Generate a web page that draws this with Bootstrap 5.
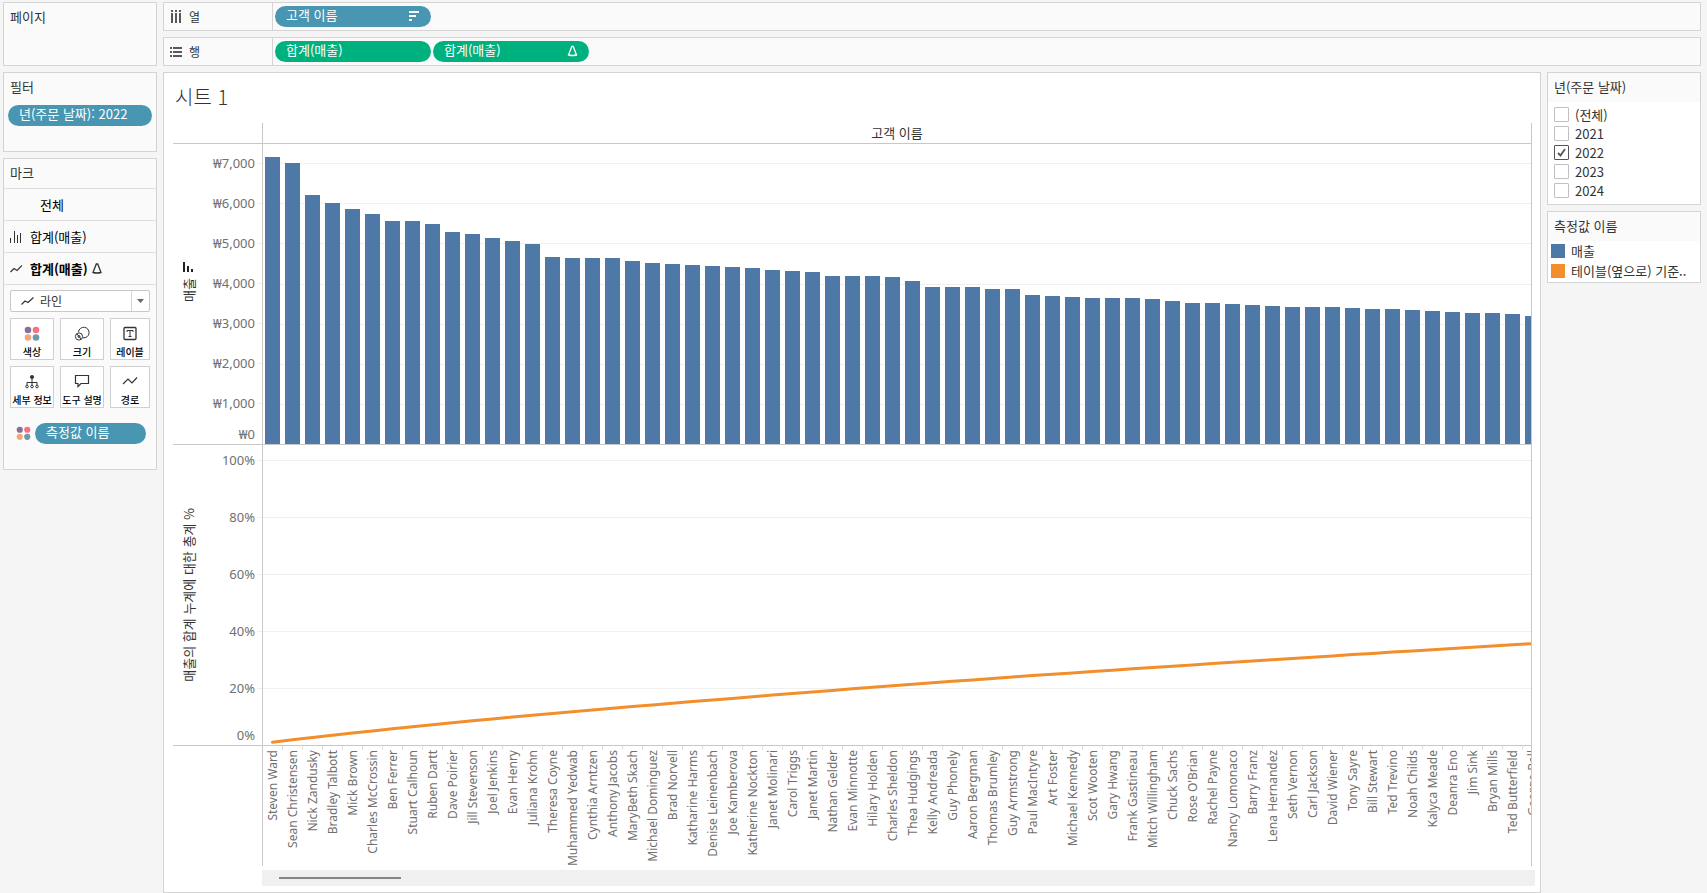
<!DOCTYPE html>
<html lang="ko">
<head>
<meta charset="utf-8">
<meta name="viewport" content="width=device-width, initial-scale=1">
<title>시트 1</title>
<link rel="stylesheet" href="https://cdn.jsdelivr.net/npm/bootstrap@5.3.0/dist/css/bootstrap.min.css">
<style>
  :root { --edge: #d4d4d4; --axis: #c8c8c8; --grid: #f0f0f0; --dim: #4996b2; --measure: #00b180; }
  body { background: #f5f5f5; color: #333; font: 13px/20px "Noto Sans CJK KR", "Noto Sans", sans-serif; }
  .workspace { padding: 2px 6px 0 3px; gap: 6px; }
  .side { flex: 0 0 154px; gap: 6px; }
  .main-area { gap: 6px; min-width: 0; }
  .panel { border: 1px solid var(--edge); background: #fafafa; }
  .panel-title { height: 29px; padding: 0 6px; font-size: 13px; line-height: 28px; font-weight: 400; margin: 0; white-space: nowrap; }
  .pages { min-height: 64px; }
  .filters { min-height: 80px; }
  .pill { display: flex; justify-content: space-between; align-items: flex-start; height: 21px; border: 0; border-radius: 11px; padding: 0 11px; color: #fff; font-size: 13px; line-height: 18px; background: var(--dim); white-space: nowrap; }
  .pill-measure { background: var(--measure); }
  .filters .pill { margin: 3px 4px; width: 144px; }
  .shelf { height: 29px; }
  .shelf-name { width: 109px; padding-left: 6px; gap: 7px; border-right: 1px solid var(--edge); font-size: 12px; }
  .shelf .pill { width: 156px; }
  .shelf-pills { gap: 2px; padding-left: 2px; }

  .mark-row { height: 32px; border: 0; border-top: 1px solid #dedede; background: none; padding: 0 6px; gap: 8px; color: #000; font-size: 13px; width: 100%; }
  .mark-row.all { padding-left: 36px; }
  .mark-body { border-top: 1px solid #dedede; padding: 5px 6px 25px; }
  .mark-type { height: 22px; }
  .mark-type select { height: 22px; border: 1px solid #c8c8c8; border-radius: 2px; background: #fff; padding: 0 0 0 29px; font-size: 12px; line-height: 20px; color: #333; appearance: none; }
  .mark-type svg { position: absolute; left: 11px; top: 6px; pointer-events: none; }
  .mark-type .drop { left: auto; right: 0; top: 1px; }
  .mark-grid { display: grid; grid-template-columns: 44px 44px 40px; gap: 6px; margin-top: 6px; }
  .mark-btn { height: 42px; border: 1px solid #d0d0d0; background: #fff; padding: 5px 0 0; font-size: 10px; line-height: 14px; font-weight: 500; color: #000; white-space: nowrap; }
  .mark-btn svg { display: block; margin: 0 auto 2px; }
  .mark-pill { margin-top: 15px; padding-left: 6px; gap: 4px; }
  .mark-pill .pill { width: 111px; }

  .card-body-white { background: #fff; }
  .year-list { padding: 3px 0 4px 6px; }
  .year-list label { height: 19px; gap: 6px; }
  .year-list input { appearance: none; width: 15px; height: 15px; margin: 0; border: 1px solid #c0c0c0; border-radius: 1px; background: #fff; }
  .year-list input:checked { border-color: #555; background: #fff url("data:image/svg+xml,%3Csvg xmlns='http://www.w3.org/2000/svg' viewBox='0 0 13 13'%3E%3Cpath d='M3 7l2.500 2.500L10 3' fill='none' stroke='%23555' stroke-width='1.800'/%3E%3C/svg%3E"); }
  .legend-list { padding: 0 0 1px 3px; }
  .legend-list li { gap: 6px; white-space: nowrap; }
  .swatch { width: 14px; height: 14px; }

  .sheet { background: #fff; padding: 0 8px 6px 9px; }
  .sheet-title { height: 50px; margin: 0; padding-left: 2px; font: 300 20px/48px "Noto Sans CJK KR Light", "Noto Sans CJK KR", sans-serif; }
  .axis-col { flex: 0 0 89px; }
  .plot-col { min-width: 0; overflow: hidden; border: solid var(--axis); border-width: 0 1px; }
  .pane-row { border-bottom: 1px solid var(--axis); }
  .pane { height: 300px; }
  .pane svg { display: block; }
  .col-header { height: 20px; line-height: 20px; }
  .sideways { writing-mode: vertical-rl; text-orientation: sideways; transform: rotate(180deg); white-space: nowrap; }
  .axis-title { width: 31px; gap: 6px; }
  .ticks { font: 13px/20px "Noto Sans", "Noto Sans CJK KR", sans-serif; color: #707070; }
  .ticks li { gap: 2px; height: 20px; }
  .ticks li::after { content: ""; width: 5px; height: 1px; background: var(--grid); }
  .ticks li:last-child { margin-top: auto; }
  .ticks li:last-child::after { background: none; }
  .ticks-sales { padding-top: 9px; }
  .ticks-sales li:not(:nth-last-child(-n+2)) { margin-bottom: 20px; }
  .ticks-share { padding-top: 5px; }
  .ticks-share li:not(:nth-last-child(-n+2)) { margin-bottom: 37px; }
  .names { height: 120px; }
  .names li { flex: 0 0 20px; height: 120px; color: #707070; font: 12px/20px "Noto Sans", sans-serif; }
  .names li::before { content: ""; display: block; height: 4px; border-right: 1px solid #e0e0e0; }
  .track { height: 16px; margin: 4px -3px 0 89px; background: #f0f0f0; padding: 7px 17px; }
  .thumb { width: 122px; height: 2px; background: #858585; }
</style>
</head>
<body>
<div class="workspace d-flex align-items-start">
  <aside class="side d-flex flex-column">
    <section class="panel pages"><h2 class="panel-title">페이지</h2></section>
    <section class="panel filters">
      <h2 class="panel-title">필터</h2>
      <button type="button" class="pill">년(주문 날짜): 2022</button>
    </section>
    <section class="panel">
      <h2 class="panel-title">마크</h2>
      <button type="button" class="mark-row all d-flex align-items-center">전체</button>
      <button type="button" class="mark-row d-flex align-items-center">
        <svg width="12" height="14" fill="none" stroke="#333"><path d="M.5 8v5M4.500 1v12M7.500 5v8M10.500 3v10"/></svg>합계(매출)
      </button>
      <button type="button" class="mark-row d-flex align-items-center fw-bold">
        <svg width="12" height="10" fill="none" stroke="#333" stroke-width="1.200"><path d="M.5 8L4 4.500 7 6.500 12 1.500"/></svg>
        <span class="d-flex align-items-center gap-1">합계(매출)
          <svg width="10" height="11" fill="none" stroke="#333" stroke-width="1.300"><path d="M4.300 1h1.400L9 9.500Q5 10.500 1 9.500Z"/></svg></span>
      </button>
      <div class="mark-body">
        <div class="mark-type position-relative">
          <select class="w-100" aria-label="마크 유형"><option>라인</option></select>
          <svg width="13" height="10" fill="none" stroke="#333" stroke-width="1.200"><path d="M.5 8.500L4 5 7 6.500 12.500 1.500"/></svg>
          <svg class="drop" width="19" height="20"><path d="M.5 0v20" stroke="#d4d4d4"/><path d="M6 8h7l-3.500 4z" fill="#666"/></svg>
        </div>
        <div class="mark-grid">
          <button type="button" class="mark-btn"><svg width="16" height="18"><g id="dots"><circle cx="4" cy="5" r="3.300" fill="#85709a"/><circle cx="12" cy="5" r="3.300" fill="#fb7080"/><circle cx="4" cy="12.500" r="3.300" fill="#f4a878"/><circle cx="12" cy="12.500" r="3.300" fill="#6f99a6"/></g></svg>색상</button>
          <button type="button" class="mark-btn"><svg width="16" height="18" fill="none" stroke="#333"><path d="M4.500 7A5.300 5.300 0 1 1 9 12.800"/><circle cx="5" cy="11.500" r="3.600"/><circle cx="5" cy="11.500" r="1"/><path d="M3 9l4 5"/></svg>크기</button>
          <button type="button" class="mark-btn"><svg width="16" height="18" fill="none" stroke="#333"><rect x="2" y="2.500" width="12" height="12" rx="1" stroke-width="1.300"/><path d="M5 7V5.500h6V7M8 5.500v6M6.500 11.500h3"/></svg>레이블</button>
          <button type="button" class="mark-btn"><svg width="16" height="18" fill="none" stroke="#333"><circle cx="8" cy="4" r="2" fill="#333" stroke="none"/><path d="M8 5v7M3 12V9.500h10V12"/><circle cx="3" cy="13.500" r="1.300"/><circle cx="8" cy="13.500" r="1.300"/><circle cx="13" cy="13.500" r="1.300"/></svg>세부 정보</button>
          <button type="button" class="mark-btn"><svg width="16" height="18" fill="none" stroke="#333" stroke-width="1.200"><path d="M1.500 2.500h13v8H7l-3 3v-3H1.500z"/></svg>도구 설명</button>
          <button type="button" class="mark-btn"><svg width="16" height="18" fill="none" stroke="#333" stroke-width="1.200"><path d="M1 11L6 6l4 4L15 4.500"/></svg>경로</button>
        </div>
        <div class="mark-pill d-flex align-items-center">
          <svg width="15" height="17" viewBox="0 0 16 18"><use href="#dots"/></svg>
          <button type="button" class="pill">측정값 이름</button>
        </div>
      </div>
    </section>
  </aside>

  <div class="main-area d-flex flex-column flex-grow-1">
    <section class="panel shelf d-flex">
      <div class="shelf-name d-flex align-items-center"><svg width="12" height="13" fill="#595959"><path d="M1 0h2v2H1zM5 0h2v2H5zM9 0h2v2H9zM1 3h2v10H1zM5 3h2v10H5zM9 3h2v10H9z"/></svg>열</div>
      <div class="shelf-pills d-flex align-items-center">
        <button type="button" class="pill">고객 이름<svg class="mt-1" width="11" height="12" fill="#fff"><path d="M0 1h10v2H0zM0 5h7v2H0zM0 9h3v2H0z"/></svg></button>
      </div>
    </section>
    <section class="panel shelf d-flex">
      <div class="shelf-name d-flex align-items-center"><svg width="12" height="12" fill="#595959"><path d="M0 1h2v2H0zM0 5h2v2H0zM0 9h2v2H0zM3 1h9v2H3zM3 5h9v2H3zM3 9h9v2H3z"/></svg>행</div>
      <div class="shelf-pills d-flex align-items-center">
        <button type="button" class="pill pill-measure">합계(매출)</button>
        <button type="button" class="pill pill-measure">합계(매출)<svg class="mt-1" width="11" height="12" fill="none" stroke="#fff" stroke-width="1.300"><path d="M4.800 1.500h1.400L9.500 10Q5.500 11 1.500 10Z"/></svg></button>
      </div>
    </section>

    <div class="d-flex align-items-start main-area flex-row">
      <main class="panel sheet flex-grow-1 main-area">
        <h1 class="sheet-title">시트 1</h1>
        <div class="pane-row d-flex">
          <div class="axis-col"></div>
          <div class="plot-col col-header flex-grow-1 text-center">고객 이름</div>
        </div>
        <div class="pane-row d-flex">
          <div class="axis-col d-flex">
            <div class="axis-title d-flex flex-column align-items-center justify-content-center pb-4">
              <svg width="11" height="10" fill="#222"><path d="M0 0h2v10H0zM4 4h2v6H4zM8 7h2v3H8z"/></svg>
              <span class="sideways">매출</span>
            </div>
            <ul class="ticks ticks-sales list-unstyled mb-0 d-flex flex-column flex-grow-1" id="salesTicks"></ul>
          </div>
          <div class="plot-col pane flex-grow-1"><svg id="bars" width="100%" height="300" shape-rendering="crispEdges"></svg></div>
        </div>
        <div class="pane-row d-flex">
          <div class="axis-col d-flex">
            <div class="axis-title d-flex flex-column align-items-center justify-content-center">
              <span class="sideways">매출의 합계 누계에 대한 총계 %</span>
            </div>
            <ul class="ticks ticks-share list-unstyled mb-0 d-flex flex-column flex-grow-1" id="shareTicks"></ul>
          </div>
          <div class="plot-col pane flex-grow-1"><svg id="share" width="100%" height="300"></svg></div>
        </div>
        <div class="d-flex">
          <div class="axis-col"></div>
          <div class="plot-col flex-grow-1"><ul class="names list-unstyled mb-0 d-flex" id="names"></ul></div>
        </div>
        <div class="track"><div class="thumb"></div></div>
      </main>

      <aside class="side d-flex flex-column">
        <section class="panel">
          <h2 class="panel-title">년(주문 날짜)</h2>
          <div class="card-body-white year-list">
            <label class="d-flex align-items-center"><input type="checkbox">(전체)</label>
            <label class="d-flex align-items-center"><input type="checkbox">2021</label>
            <label class="d-flex align-items-center"><input type="checkbox" checked>2022</label>
            <label class="d-flex align-items-center"><input type="checkbox">2023</label>
            <label class="d-flex align-items-center"><input type="checkbox">2024</label>
          </div>
        </section>
        <section class="panel">
          <h2 class="panel-title">측정값 이름</h2>
          <ul class="card-body-white legend-list list-unstyled mb-0">
            <li class="d-flex align-items-center"><span class="swatch" style="background:#4e79a7"></span>매출</li>
            <li class="d-flex align-items-center"><span class="swatch" style="background:#f28e2b"></span>테이블(옆으로) 기준..</li>
          </ul>
        </section>
      </aside>
    </div>
  </div>
</div>

<script src="https://cdn.jsdelivr.net/npm/bootstrap@5.3.0/dist/js/bootstrap.bundle.min.js"></script>
<script>
  // customer name and bar height, in descending order of sales
  const data = [
    ["Steven Ward",287],["Sean Christensen",281],["Nick Zandusky",249],["Bradley Talbott",241],["Mick Brown",235],
    ["Charles McCrossin",230],["Ben Ferrer",223],["Stuart Calhoun",223],["Ruben Dartt",220],["Dave Poirier",212],
    ["Jill Stevenson",210],["Joel Jenkins",206],["Evan Henry",203],["Juliana Krohn",200],["Theresa Coyne",187],
    ["Muhammed Yedwab",186],["Cynthia Arntzen",186],["Anthony Jacobs",186],["MaryBeth Skach",183],["Michael Dominguez",181],
    ["Brad Norvell",180],["Katharine Harms",179],["Denise Leinenbach",178],["Joe Kamberova",177],["Katherine Nockton",176],
    ["Janet Molinari",174],["Carol Triggs",173],["Janet Martin",172],["Nathan Gelder",168],["Evan Minnotte",168],
    ["Hilary Holden",168],["Charles Sheldon",167],["Thea Hudgings",163],["Kelly Andreada",157],["Guy Phonely",157],
    ["Aaron Bergman",157],["Thomas Brumley",155],["Guy Armstrong",155],["Paul MacIntyre",149],["Art Foster",148],
    ["Michael Kennedy",147],["Scot Wooten",146],["Gary Hwang",146],["Frank Gastineau",146],["Mitch Willingham",145],
    ["Chuck Sachs",143],["Rose O'Brian",141],["Rachel Payne",141],["Nancy Lomonaco",140],["Barry Franz",139],
    ["Lena Hernandez",138],["Seth Vernon",137],["Carl Jackson",137],["David Wiener",137],["Tony Sayre",136],
    ["Bill Stewart",135],["Ted Trevino",135],["Noah Childs",134],["Kalyca Meade",133],["Deanra Eno",132],
    ["Jim Sink",131],["Bryan Mills",131],["Ted Butterfield",130],["George Bell",128]
  ];
  const band = 20, paneHeight = 300;
  const gridLine = y => `<path d="M0 ${y}.5H4000" stroke="#f0f0f0"/>`;
  const byId = id => document.getElementById(id);

  byId("bars").innerHTML = [19, 59, 99, 140, 180, 220, 260].map(gridLine).join("") +
    data.map(([, h], i) => `<rect x="${i * band + 2}" y="${paneHeight - h}" width="15" height="${h}" fill="#4e79a7"/>`).join("");

  let running = 0;
  const points = data.map(([, h], i) => {
    running += h;
    return `${i * band + 9.5},${(paneHeight - running * 0.00925).toFixed(1)}`;
  });
  byId("share").innerHTML = [15, 72, 129, 186, 243].map(gridLine).join("") +
    `<polyline points="${points.join(" ")}" fill="none" stroke="#f28e2b" stroke-width="3" stroke-linecap="round" stroke-linejoin="round"/>`;

  const tick = text => `<li class="d-flex align-items-center justify-content-end">${text}</li>`;
  byId("salesTicks").innerHTML = ["₩7,000", "₩6,000", "₩5,000", "₩4,000", "₩3,000", "₩2,000", "₩1,000", "₩0"].map(tick).join("");
  byId("shareTicks").innerHTML = ["100%", "80%", "60%", "40%", "20%", "0%"].map(tick).join("");
  byId("names").innerHTML = data.map(([name]) => `<li><span class="sideways d-block">${name}</span></li>`).join("");
</script>
</body>
</html>
